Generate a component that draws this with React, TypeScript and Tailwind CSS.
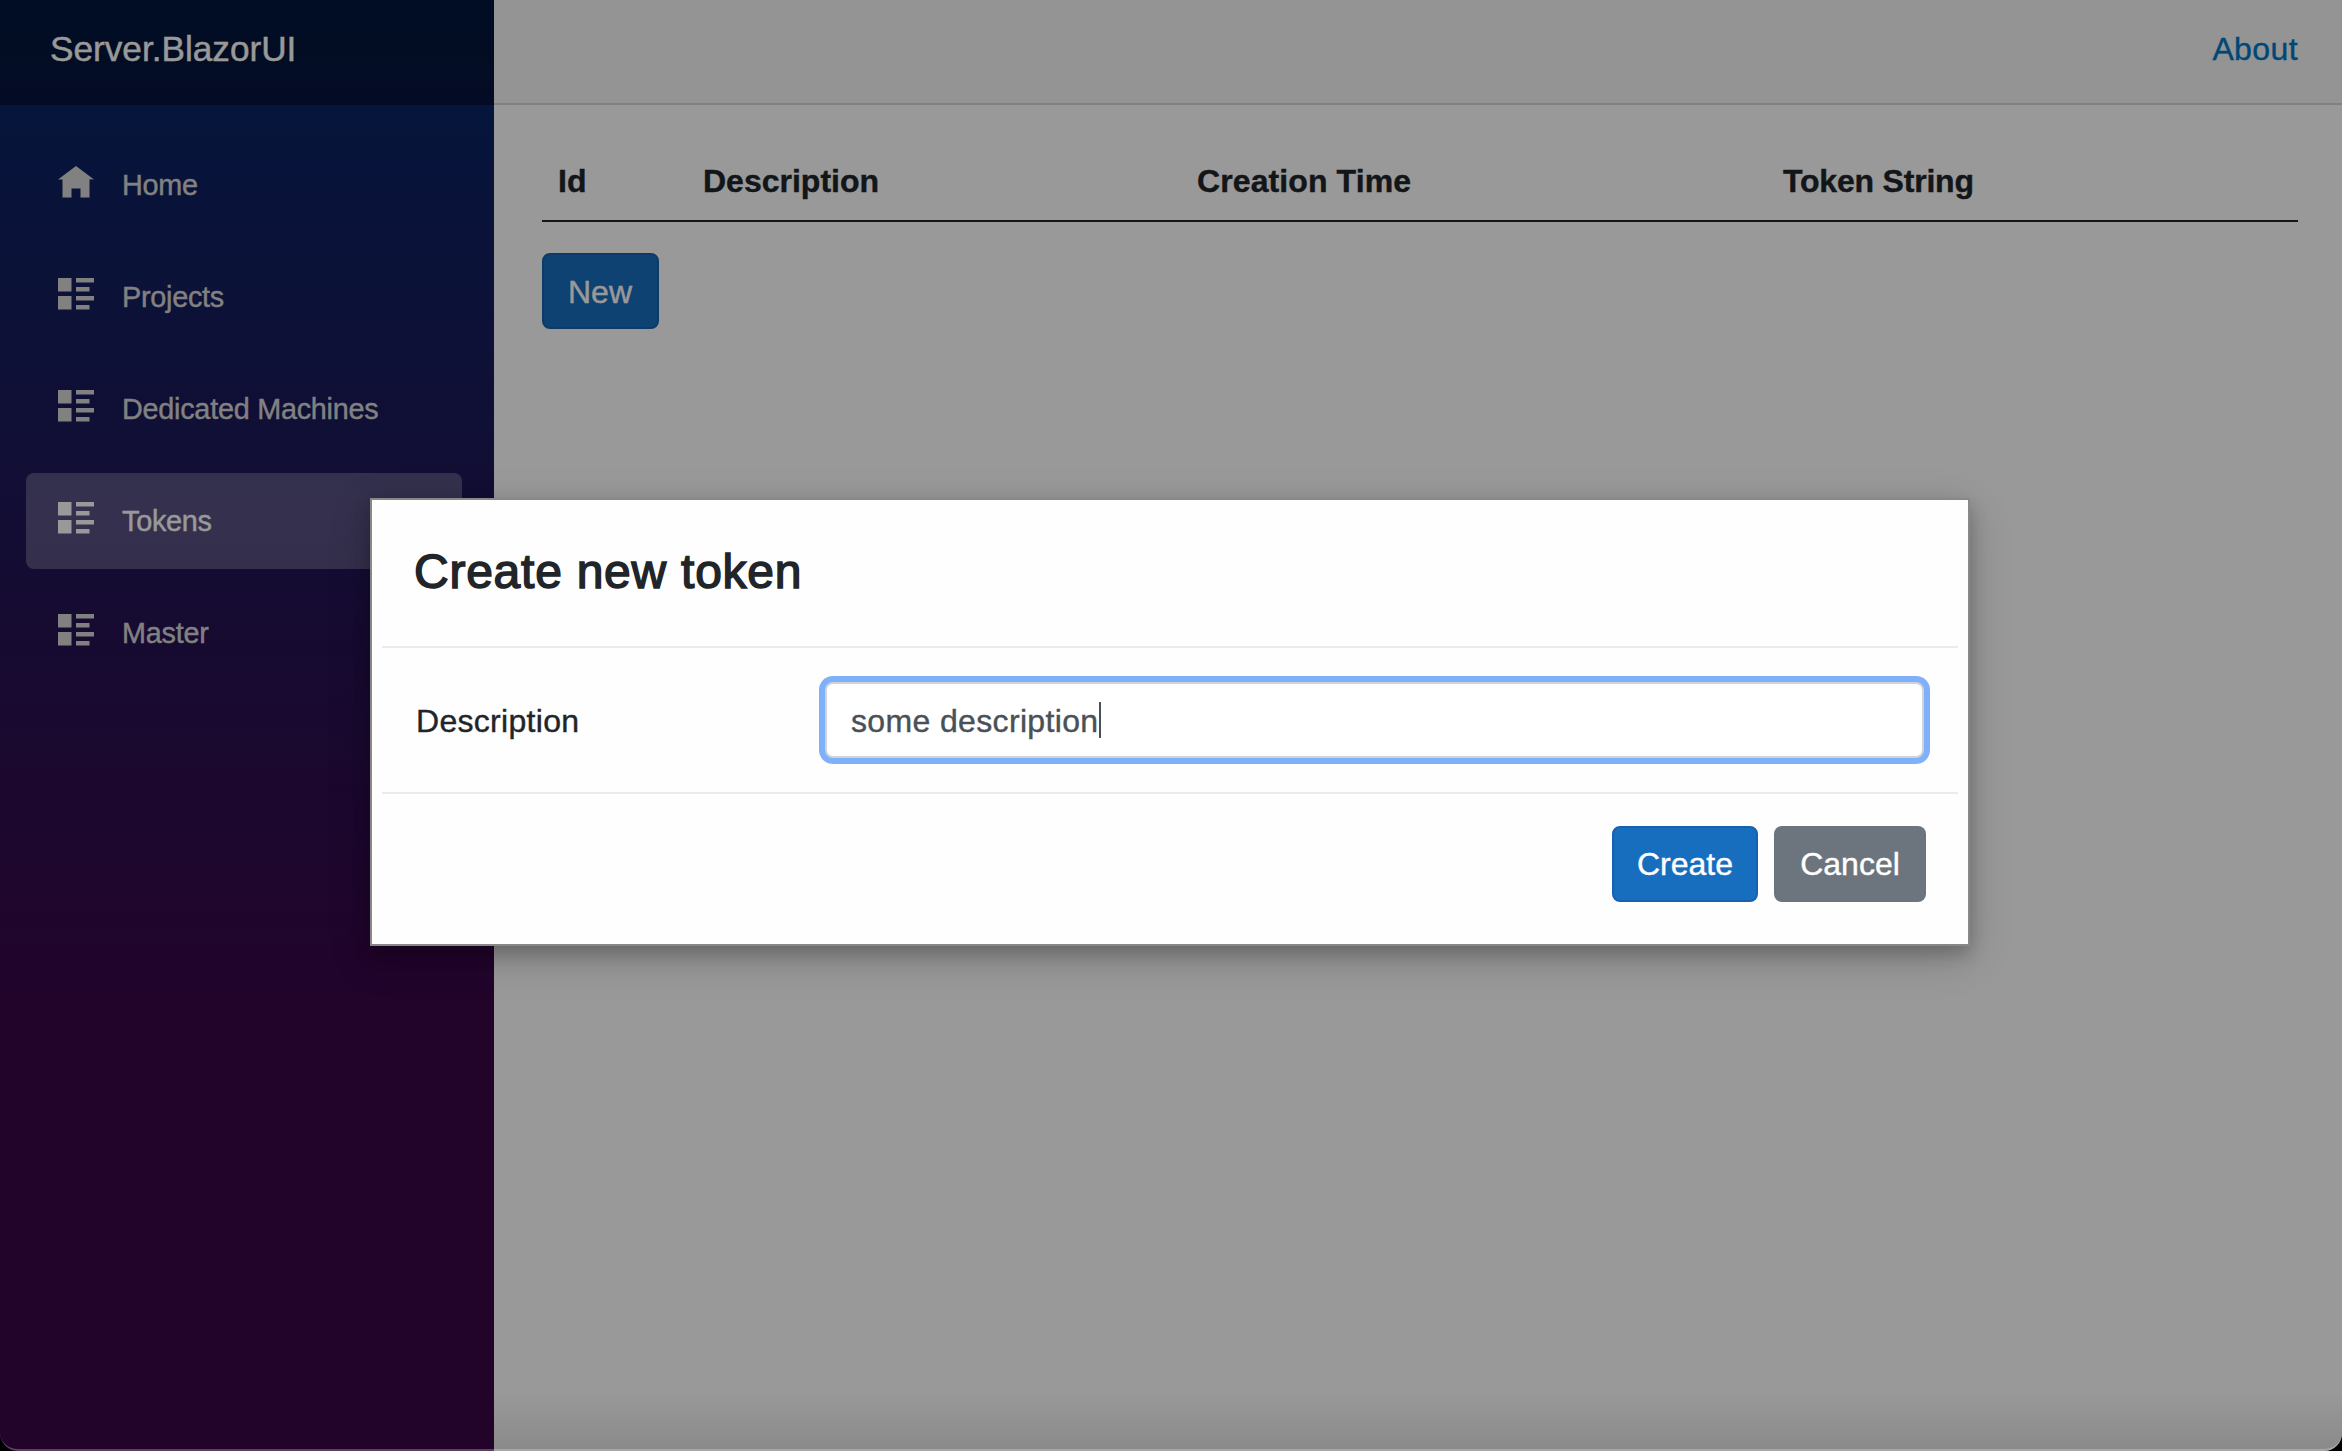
import React from "react";

const HOME = "M4 0l-4 3h1v4h2v-2h2v2h2v-4.03l1 .03-4-3z";
const LIST =
  "M0 0v3h3v-3h-3zm4 0v1h4v-1h-4zm0 2v1h3v-1h-3zm-4 2v3h3v-3h-3zm4 0v1h4v-1h-4zm0 2v1h3v-1h-3z";

const items = [
  { label: "Home", icon: HOME },
  { label: "Projects", icon: LIST },
  { label: "Dedicated Machines", icon: LIST },
  { label: "Tokens", icon: LIST, active: true },
  { label: "Master", icon: LIST },
];

function Sidebar() {
  return (
    <aside className="flex w-[494px] shrink-0 flex-col bg-[linear-gradient(180deg,rgb(5,39,103)_0%,#3a0647_70%)]">
      <div className="flex h-[105px] items-center bg-black/40 pb-[7px] pl-[50px]">
        <span className="text-[35.2px] leading-[52px] text-white">Server.BlazorUI</span>
      </div>
      <nav className="flex flex-col gap-4 pt-8 pr-8 pl-[26px]">
        {items.map((it) => (
          <a
            key={it.label}
            className={
              "flex h-24 items-center rounded-lg pl-8 text-[28.8px] tracking-[-0.25px] " +
              (it.active ? "bg-white/25 text-white" : "text-[#d7d7d7]")
            }
          >
            <svg viewBox="0 0 8 8" className="mr-7 mb-[3px] size-9 fill-current">
              <path d={it.icon} />
            </svg>
            <span className="leading-[96px]">{it.label}</span>
          </a>
        ))}
      </nav>
    </aside>
  );
}

function TokensPage() {
  return (
    <main className="flex grow flex-col bg-white text-[32px] leading-[48px] text-[#212529]">
      <header className="flex h-[105px] items-center justify-end border-b-2 border-[#d6d5d5] bg-[#f7f7f7] pr-11 pb-[5px]">
        <a className="tracking-[0.4px] text-[#0077c8]">About</a>
      </header>
      <section className="flex flex-col items-start pr-11 pl-12">
        <div className="mt-[39px] grid h-[78px] w-full grid-cols-[145px_494px_586px_1fr] border-b-2 border-[#212529] pt-[13px] pl-4 font-bold">
          <span>Id</span>
          <span>Description</span>
          <span className="tracking-[0.1px]">Creation Time</span>
          <span className="tracking-[-0.2px]">Token String</span>
        </div>
        <button className="mt-[31px] h-[76px] w-[117px] rounded-lg border-2 border-[#1861ac] bg-[#176ebf] pt-px pr-px text-white">
          New
        </button>
      </section>
    </main>
  );
}

function TokenDialog() {
  return (
    <div className="absolute top-[498px] left-[370px] flex h-[448px] w-[1600px] flex-col border-2 border-[#888] bg-[#fefefe] px-2.5 text-[32px] leading-[48px] text-[#212529] shadow-[0_8px_16px_0_rgba(0,0,0,0.2),0_12px_40px_0_rgba(0,0,0,0.19)]">
      <h4 className="h-[148px] border-b-2 border-[#e9ecef] pt-[43px] pl-8 text-[48px] leading-[58px] tracking-[0.75px] [-webkit-text-stroke:1.5px_#212529]">
        Create new token
      </h4>
      <div className="flex h-[146px] items-center border-b-2 border-[#e9ecef] pr-[34px] pl-[34px]">
        <label className="w-[409px] pt-0.5 tracking-[0.3px]">Description</label>
        <div className="flex h-[76px] grow items-center rounded-lg border-2 border-[#ced4da] bg-white pl-6 text-[#495057] ring-6 ring-[#80b0f9]">
          <span className="pt-0.5 tracking-[0.35px]">some description</span>
          <span className="h-9 w-0.5 bg-[#495057]" />
        </div>
      </div>
      <div className="flex justify-end gap-4 pt-8 pr-8">
        <button className="h-[76px] w-[146px] rounded-lg border-2 border-[#1861ac] bg-[#176ebf] text-white">
          Create
        </button>
        <button className="h-[76px] w-[152px] rounded-lg bg-[#6c757d] text-white">Cancel</button>
      </div>
    </div>
  );
}

export default function App() {
  return (
    <div className="h-[1451px] w-[2342px] bg-black">
      <div className="relative flex h-full overflow-hidden rounded-b-[18px] font-['Liberation_Sans',Arial,sans-serif] [-webkit-text-stroke:0.4px]">
        <Sidebar />
        <TokensPage />
        <div className="absolute inset-0 bg-black/40" />
        <TokenDialog />
        <div className="absolute right-0 bottom-0 left-[494px] h-[60px] bg-linear-to-b from-transparent to-black/10" />
        <div className="absolute inset-0 rounded-b-[18px] border-b-2 border-white/25" />
      </div>
    </div>
  );
}
